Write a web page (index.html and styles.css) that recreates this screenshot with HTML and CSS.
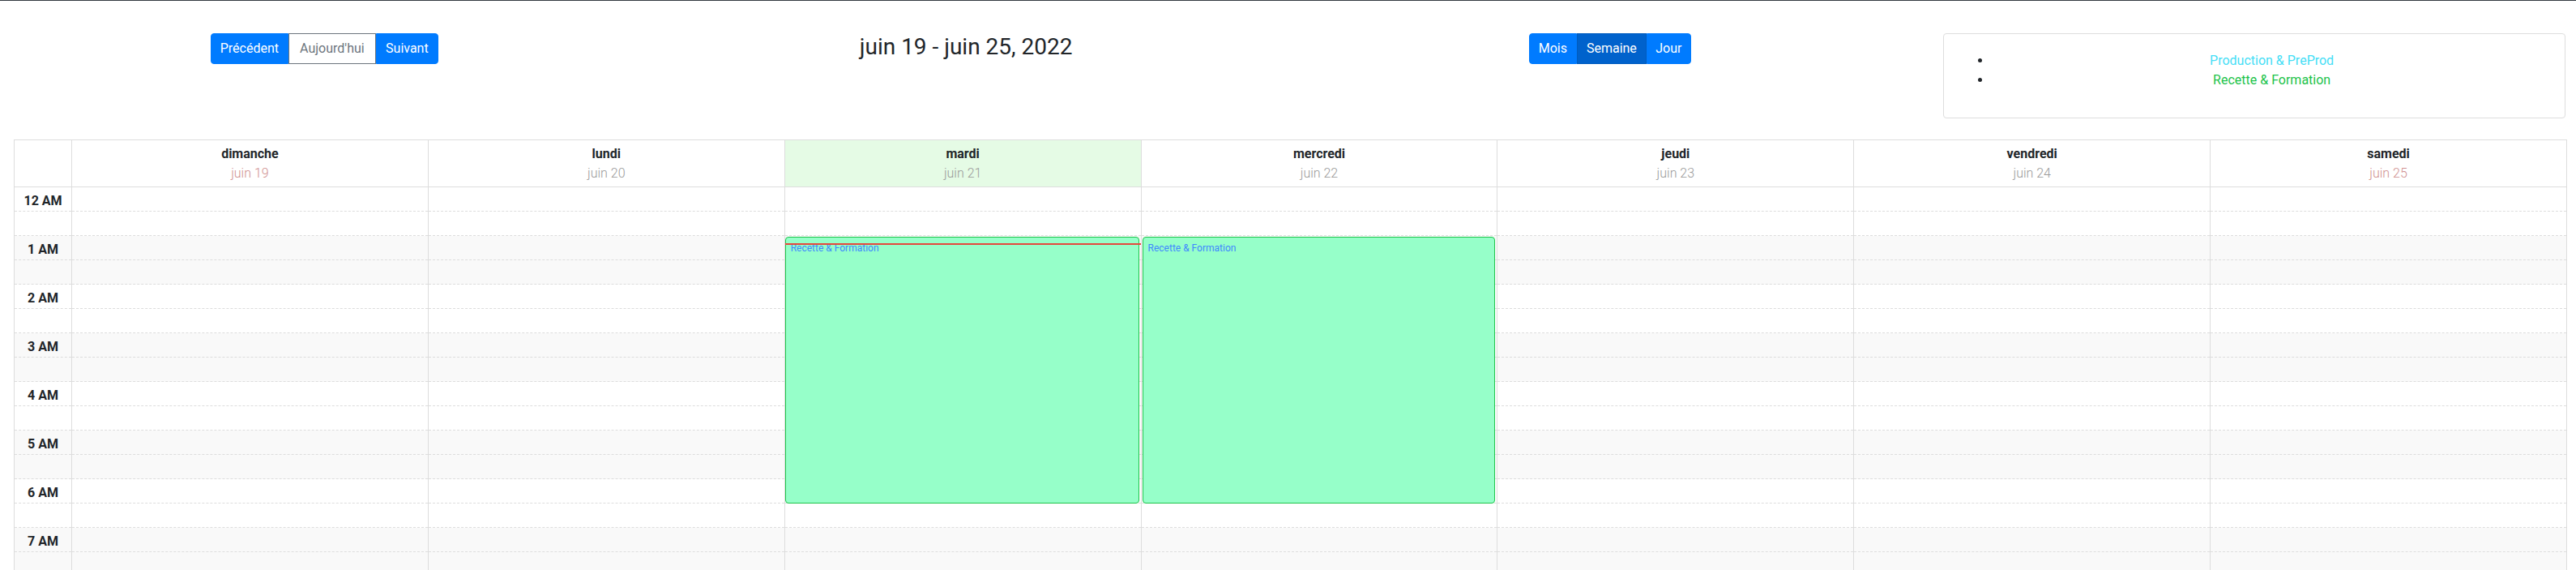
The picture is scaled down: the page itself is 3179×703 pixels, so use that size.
FILE: index.html
```html
<!DOCTYPE html>
<html lang="fr">
<head>
<meta charset="utf-8">
<title>Calendrier</title>
<link rel="stylesheet" href="styles.css">
</head>
<body>
<div class="topline"></div>
<header class="toolbar">
  <div class="tcol">
    <div class="btn-group nav-group">
      <button class="btn btn-primary w-prev">Précédent</button>
      <button class="btn btn-outline w-today">Aujourd'hui</button>
      <button class="btn btn-primary w-next">Suivant</button>
    </div>
  </div>
  <div class="tcol">
    <h2 class="title">juin 19 - juin 25, 2022</h2>
  </div>
  <div class="tcol">
    <div class="btn-group">
      <button class="btn btn-primary w-month">Mois</button>
      <button class="btn btn-primary active w-week">Semaine</button>
      <button class="btn btn-primary w-day">Jour</button>
    </div>
  </div>
  <div class="tcol tcol-legend">
    <div class="legend">
      <ul>
        <li class="lg-prod">Production &amp; PreProd</li>
        <li class="lg-rec">Recette &amp; Formation</li>
      </ul>
    </div>
  </div>
</header>

<div class="cal">
  <div class="cal-head">
    <div class="gh"></div>
    <div class="dh"><div class="dn">dimanche</div><div class="dd we">juin 19</div></div>
    <div class="dh"><div class="dn">lundi</div><div class="dd">juin 20</div></div>
    <div class="dh today"><div class="dn">mardi</div><div class="dd">juin 21</div></div>
    <div class="dh"><div class="dn">mercredi</div><div class="dd">juin 22</div></div>
    <div class="dh"><div class="dn">jeudi</div><div class="dd">juin 23</div></div>
    <div class="dh"><div class="dn">vendredi</div><div class="dd">juin 24</div></div>
    <div class="dh"><div class="dn">samedi</div><div class="dd we">juin 25</div></div>
  </div>
  <div class="cal-body">
    <div class="gutter">
      <div class="ghr"><div class="tl">12 AM</div></div>
      <div class="ghr"><div class="tl">1 AM</div></div>
      <div class="ghr"><div class="tl">2 AM</div></div>
      <div class="ghr"><div class="tl">3 AM</div></div>
      <div class="ghr"><div class="tl">4 AM</div></div>
      <div class="ghr"><div class="tl">5 AM</div></div>
      <div class="ghr"><div class="tl">6 AM</div></div>
      <div class="ghr"><div class="tl">7 AM</div></div>
    </div>
    <div class="day">
      <div class="hr"></div><div class="hr"></div><div class="hr"></div><div class="hr"></div>
      <div class="hr"></div><div class="hr"></div><div class="hr"></div><div class="hr"></div>
    </div>
    <div class="day">
      <div class="hr"></div><div class="hr"></div><div class="hr"></div><div class="hr"></div>
      <div class="hr"></div><div class="hr"></div><div class="hr"></div><div class="hr"></div>
    </div>
    <div class="day">
      <div class="hr"></div><div class="hr"></div><div class="hr"></div><div class="hr"></div>
      <div class="hr"></div><div class="hr"></div><div class="hr"></div><div class="hr"></div>
      <div class="ev ev-first">Recette &amp; Formation</div>
      <div class="now"></div>
    </div>
    <div class="day">
      <div class="hr"></div><div class="hr"></div><div class="hr"></div><div class="hr"></div>
      <div class="hr"></div><div class="hr"></div><div class="hr"></div><div class="hr"></div>
      <div class="ev">Recette &amp; Formation</div>
    </div>
    <div class="day">
      <div class="hr"></div><div class="hr"></div><div class="hr"></div><div class="hr"></div>
      <div class="hr"></div><div class="hr"></div><div class="hr"></div><div class="hr"></div>
    </div>
    <div class="day">
      <div class="hr"></div><div class="hr"></div><div class="hr"></div><div class="hr"></div>
      <div class="hr"></div><div class="hr"></div><div class="hr"></div><div class="hr"></div>
    </div>
    <div class="day">
      <div class="hr"></div><div class="hr"></div><div class="hr"></div><div class="hr"></div>
      <div class="hr"></div><div class="hr"></div><div class="hr"></div><div class="hr"></div>
    </div>
  </div>
</div>
</body>
</html>
```
FILE: styles.css
```css
html, body {
  margin: 0;
  padding: 0;
  overflow: hidden;
  background: #fff;
}
body {
  font-family: "Segoe UI", Roboto, "Noto Sans", sans-serif;
  font-size: 16px;
  line-height: 24px;
  color: #212529;
}
.topline {
  height: 1px;
  background: #343a40;
}
.toolbar {
  display: flex;
  padding-top: 40px;
  margin-bottom: 26px;
}
.tcol {
  flex: 1 1 0;
  min-width: 0;
  display: flex;
  justify-content: center;
  align-items: flex-start;
}
.btn-group {
  display: flex;
}
.nav-group {
  margin-left: 6px;
}
.btn {
  font-family: inherit;
  font-size: 16px;
  line-height: 24px;
  padding: 6px 0;
  border: 1px solid #007bff;
  background: #007bff;
  color: #fff;
  text-align: center;
  margin: 0;
  border-radius: 0;
}
.btn-group .btn:first-child {
  border-radius: 4px 0 0 4px;
}
.btn-group .btn:last-child {
  border-radius: 0 4px 4px 0;
}
.btn-outline {
  background: #fff;
  color: #6c757d;
  border-color: #6c757d;
}
.btn.active {
  background: #0062cc;
  border-color: #005cbf;
}
.w-prev { width: 96px; }
.w-today { width: 108px; }
.w-next { width: 77px; }
.w-month { width: 59px; }
.w-week { width: 86px; }
.w-day { width: 55px; }

.title {
  margin: 0;
  font-size: 28px;
  font-weight: 400;
  line-height: 34px;
  color: #212529;
}
.tcol-legend {
  justify-content: stretch;
}
.legend {
  flex: 1;
  margin: 0 13px 0 14px;
  border: 1px solid #dedede;
  border-radius: 4px;
  padding: 21px 16px 34px 19px;
}
.legend ul {
  margin: 0;
  padding-left: 40px;
}
.legend li {
  text-align: center;
  line-height: 24px;
  height: 24px;
}
.legend li::marker {
  color: #212529;
}
.lg-prod { color: #45def6; }
.lg-rec { color: #1cc34a; }

.cal {
  margin-left: 17px;
  width: 3151px;
  box-sizing: border-box;
  border: 1px solid #ddd;
  border-bottom: 0;
}
.cal-head,
.cal-body {
  display: grid;
  grid-template-columns: 70px repeat(7, 1fr);
}
.cal-head {
  border-bottom: 1px solid #ddd;
}
.dh {
  border-left: 1px solid #ddd;
  text-align: center;
  padding: 5px 0 4px;
  line-height: 24px;
}
.dh.today {
  background: #e5fbe5;
}
.dn {
  font-weight: 700;
  font-size: 16px;
  color: #212529;
}
.dd {
  color: #9a9a9a;
  font-weight: 300;
}
.dd.we {
  color: #cf8f8f;
}

.ghr,
.hr {
  height: 60px;
  box-sizing: border-box;
  border-bottom: 1px dashed #ddd;
}
.ghr:nth-child(even),
.hr:nth-child(even) {
  background: #f9f9f9;
}
.hr::before {
  content: "";
  display: block;
  height: 30px;
  box-sizing: border-box;
  border-bottom: 1px dashed #ddd;
}
.tl {
  height: 30px;
  box-sizing: border-box;
  border-bottom: 1px dashed #ddd;
  text-align: center;
  font-weight: 700;
  font-size: 16px;
  line-height: 30px;
  padding-top: 2px;
}
.day {
  position: relative;
  border-left: 1px solid #ddd;
}
.ev {
  position: absolute;
  top: 61px;
  height: 329px;
  left: 1px;
  right: 2px;
  box-sizing: border-box;
  background: #96ffc9;
  border: 1px solid #1fc54c;
  border-radius: 4px;
  padding: 6px 0 0 6px;
  font-size: 12px;
  line-height: 14px;
  color: #3f88ff;
  z-index: 1;
}
.ev-first {
  left: 0;
}
.now {
  position: absolute;
  top: 69px;
  left: 0;
  right: 0;
  height: 2px;
  background: #e5473d;
  z-index: 2;
}
```
